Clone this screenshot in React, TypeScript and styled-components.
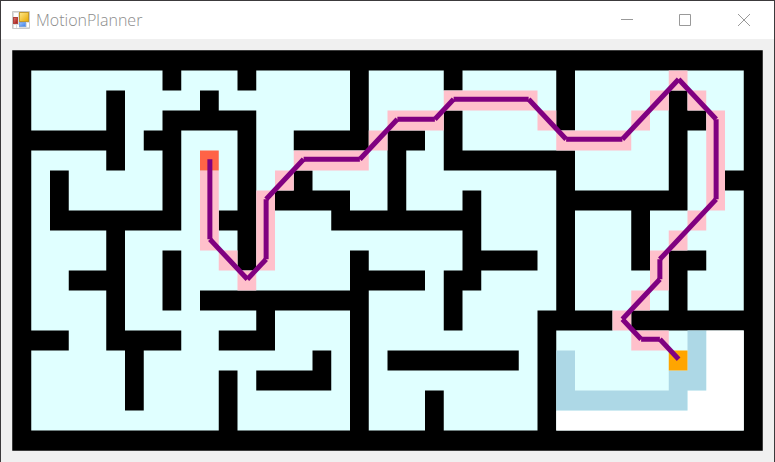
import React from "react";
import styled, { createGlobalStyle } from "styled-components";

const GlobalStyle = createGlobalStyle`
  * {
    box-sizing: border-box;
  }

  body {
    margin: 0;
    background: #f0f0f0;
    font-family: "Open Sans", "Noto Sans", sans-serif;
  }
`;

const Window = styled.div`
  display: flex;
  flex-direction: column;
  min-height: 100vh;
  border: 1px solid #3c3a3c;
  border-bottom: 0;
  background: #f0f0f0;
`;

const TitleBar = styled.header`
  display: flex;
  align-items: center;
  height: 38px;
  padding-left: 11px;
  background: #ffffff;
`;

const Title = styled.h1`
  flex: 1;
  margin: 0;
  padding-left: 6px;
  color: #8c8c8c;
  font-size: 16px;
  font-weight: 350;
  line-height: 24px;
`;

const CaptionButton = styled.button`
  display: flex;
  align-items: center;
  justify-content: center;
  width: 58px;
  height: 38px;
  padding: 0;
  border: 0;
  background: transparent;
  color: #999999;

  &:last-child {
    width: 60px;
  }

  &:hover {
    background: #e5e5e5;
  }
`;

const Client = styled.main`
  padding: 11px;
`;

const MazeDrawing = styled.svg`
  display: block;
  width: 100%;
  height: auto;
`;

/*
 * # wall, . explored, o on the path, ~ frontier,
 * S start, G goal, space not visited
 */
const MAZE = [
  "########################################",
  "#.......#...#.....#....#.....#.....o...#",
  "#....#....#.......#....ooooo.#....o#o..#",
  "#....#..#####.....#.ooo#....o#...o.##o.#",
  "######.##...#..####o##.#.....oooo..#.o.#",
  "#....#..#.S.#..oooo.#..#######.....#.o.#",
  "#.#.....#.o.#.o#....#........#.....#.o##",
  "#.#.....#.o.#o####..#...#....#######.o.#",
  "#.#######.o##o...########....#...#..o..#",
  "#....#....o.#o..........#....#...#.o...#",
  "#....#..#..o#o....#.....####.#...#o##..#",
  "#..###..#...o.....####.##....#....o#...#",
  "#....#..#.#########....#.....#...o.#...#",
  "#....#.......#....#....#....####o#######",
  "###..####..###....#.........#....oo.~  #",
  "#.....#.........#.#.#######.#~.....G~  #",
  "#.....#....#.####.#.........#~.....~~  #",
  "#.....#....#......#...#.....#~~~~~~~   #",
  "#..........#......#...#.....#          #",
  "########################################",
];

/* Painted in this order; the first layer lies under every open cell. */
const LAYERS = [
  { kinds: ".oSG~ ", color: "#e0ffff" },
  { kinds: " ", color: "#ffffff" },
  { kinds: "~", color: "#add8e6" },
  { kinds: "o", color: "#ffc0cb" },
  { kinds: "S", color: "#ff6347" },
  { kinds: "G", color: "#ffa500" },
];

const CELL_WIDTH = 18.75;
const CELL_HEIGHT = 20;

const ROUTE: [number, number][] = [
  [10, 5], [10, 9], [12, 11], [13, 10], [13, 7], [15, 5], [18, 5], [20, 3],
  [22, 3], [23, 2], [27, 2], [29, 4], [32, 4], [35, 1], [37, 3], [37, 7],
  [34, 10], [34, 11], [32, 13], [33, 14], [34, 14], [35, 15],
];

function cellsPath(kinds: string): string {
  let path = "";
  MAZE.forEach((line, row) => {
    [...line].forEach((kind, column) => {
      if (!kinds.includes(kind)) return;
      const x = column * CELL_WIDTH + 0.5;
      const y = row * CELL_HEIGHT + 0.5;
      path += `M${x} ${y}h${CELL_WIDTH}v${CELL_HEIGHT}h${-CELL_WIDTH}z`;
    });
  });
  return path;
}

function Maze() {
  const points = ROUTE.map(([column, row]) => [
    (column + 0.5) * CELL_WIDTH + 1,
    (row + 0.5) * CELL_HEIGHT - 0.75,
  ]);
  return (
    <MazeDrawing viewBox="0 0 751 401" role="img" aria-label="Planned route through the maze">
      <rect x="0.25" y="0.25" width="750.5" height="400.5" fill="#000000" />
      {LAYERS.map(({ kinds, color }) => (
        <path key={kinds} d={cellsPath(kinds)} fill={color} />
      ))}
      <g stroke="#800080" strokeWidth="5">
        {points.slice(1).map(([x, y], index) => (
          <line key={index} x1={points[index][0]} y1={points[index][1]} x2={x} y2={y} />
        ))}
      </g>
    </MazeDrawing>
  );
}

function AppIcon() {
  return (
    <svg width="18" height="18" viewBox="0 0 18 18" aria-hidden="true">
      <defs>
        <linearGradient id="gold" x1="0" y1="0" x2="1" y2="1">
          <stop offset="0" stopColor="#ffe98a" />
          <stop offset="1" stopColor="#e8a800" />
        </linearGradient>
        <linearGradient id="blue" x1="0" y1="0" x2="1" y2="1">
          <stop offset="0" stopColor="#9cc4fb" />
          <stop offset="1" stopColor="#3f7fe8" />
        </linearGradient>
        <linearGradient id="red" x1="0" y1="0" x2="1" y2="1">
          <stop offset="0" stopColor="#e0807a" />
          <stop offset="1" stopColor="#a3100e" />
        </linearGradient>
      </defs>
      <rect width="18" height="18" rx="1" fill="#c9c9c9" />
      <rect x="1" y="1" width="16" height="16" fill="#dedede" />
      <rect x="2" y="2" width="4" height="4" fill="#ffffff" />
      <rect x="2" y="14" width="2" height="3" fill="#ffffff" />
      <rect x="5" y="14" width="2" height="3" fill="#ffffff" />
      <rect x="15" y="12" width="2" height="4" fill="#ffffff" />
      <rect x="7.5" y="1.5" width="9" height="9" fill="url(#gold)" stroke="#c39a2c" />
      <rect x="1.5" y="6.5" width="4" height="6" fill="url(#red)" stroke="#b0413c" />
      <rect x="7.5" y="11.5" width="6" height="4" fill="url(#blue)" stroke="#7ba4e0" />
    </svg>
  );
}

export default function App() {
  return (
    <>
      <GlobalStyle />
      <Window>
        <TitleBar>
          <AppIcon />
          <Title>MotionPlanner</Title>
          <CaptionButton type="button" aria-label="Minimize">
            <svg width="12" height="12" viewBox="0 0 12 12" stroke="currentColor">
              <path d="M0 5.5H12" />
            </svg>
          </CaptionButton>
          <CaptionButton type="button" aria-label="Maximize">
            <svg width="12" height="12" viewBox="0 0 12 12" fill="none" stroke="currentColor">
              <path d="M.5 .5H11.5V11.5H.5Z" />
            </svg>
          </CaptionButton>
          <CaptionButton type="button" aria-label="Close">
            <svg width="12" height="12" viewBox="0 0 12 12" stroke="currentColor">
              <path d="M0 0L12 12M12 0L0 12" />
            </svg>
          </CaptionButton>
        </TitleBar>
        <Client>
          <Maze />
        </Client>
      </Window>
    </>
  );
}
